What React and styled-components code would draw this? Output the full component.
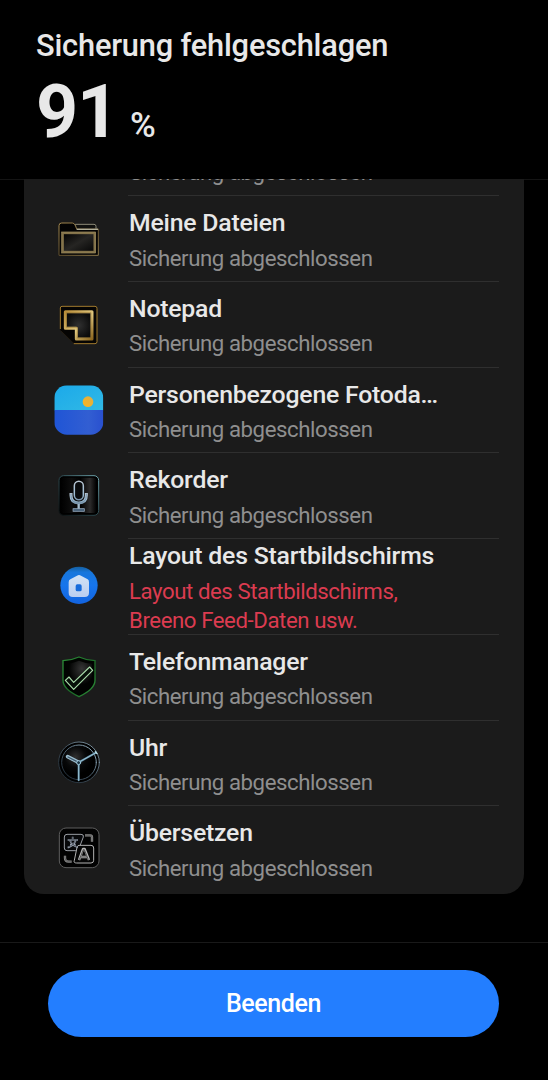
import React from 'react'
import styled, { createGlobalStyle } from 'styled-components'

const GlobalStyle = createGlobalStyle`
    * {
        box-sizing: border-box;
    }

    body {
        margin: 0;
        background: #000;
        font-family: Roboto, "Noto Sans", sans-serif;
    }
`;

const Screen = styled.div`
    display: flex;
    flex-direction: column;
    height: 1080px;
    background: #000;
    color: #e8e8e8;
    overflow: hidden;
`;

const Header = styled.header`
    flex: none;
    height: 180px;
    padding: 26px 36px 0;
    border-bottom: 1px solid #141414;
`;

const Heading = styled.h1`
    margin: 0;
    font-size: 30.8px;
    font-weight: 500;
    letter-spacing: -0.2px;
    line-height: 40px;
    white-space: nowrap;
`;

const Progress = styled.div`
    display: flex;
    align-items: baseline;
    gap: 12px;
    line-height: 92px;
`;

const Percent = styled.span`
    font-size: 73.5px;
    font-weight: 700;
    letter-spacing: -1.2px;
`;

const Sign = styled.span`
    font-size: 35px;
    font-weight: 500;
`;

/* the list is scrolled to its end, so the first row is cut off at the top */
const ListArea = styled.main`
    flex: 1;
    display: flex;
    flex-direction: column;
    justify-content: flex-end;
    min-height: 0;
    margin-top: -1px;
    padding: 0 24px 48px;
    overflow: hidden;
`;

const Card = styled.div`
    flex: none;
    padding-bottom: 2px;
    background: #1b1b1b;
    border-radius: 20px;
`;

const Row = styled.div`
    display: grid;
    grid-template-columns: 60px 371px;
    grid-template-rows: 100%;
    column-gap: 19px;
    align-items: center;
    height: ${({ $tall }) => ($tall ? '95.7px' : '85.75px')};
    padding-left: 25px;
`;

const RowText = styled.div`
    display: flex;
    flex-direction: column;
    gap: 5.5px;
    height: 100%;
    padding: ${({ $tall }) => ($tall ? '1.3px' : '11.1px')} 0 0 1px;
    border-bottom: 1px solid ${({ $last }) => ($last ? 'transparent' : '#2f2f2f')};
`;

const AppName = styled.div`
    flex: none;
    max-width: 318px;
    font-size: 24.8px;
    font-weight: 500;
    letter-spacing: -0.21px;
    line-height: 31px;
    white-space: nowrap;
    overflow: hidden;
    text-overflow: ellipsis;
`;

const Status = styled.div`
    flex: none;
    font-size: 22.2px;
    letter-spacing: -0.42px;
    line-height: 29px;
    color: ${({ $error }) => ($error ? '#dc3b50' : '#8f8f8f')};
    white-space: pre-line;
`;

const IconSvg = styled.svg`
    display: block;
    width: 60px;
    height: 60px;
`;

const Footer = styled.footer`
    flex: none;
    height: 138px;
    padding: 27px 49px 0 48px;
    border-top: 1px solid #191919;
`;

const ExitButton = styled.button`
    display: block;
    width: 100%;
    height: 67px;
    padding: 0;
    border: 0;
    border-radius: 34px;
    background: #237eff;
    color: #fff;
    font-family: inherit;
    font-size: 25px;
    font-weight: 500;
    letter-spacing: -0.4px;
`;

const FilesIcon = () => (
    <IconSvg viewBox="28 10 180 180" fill="none">
        <defs>
            <linearGradient id="folderGold" x1="0" y1="0" x2="1" y2="1">
                <stop offset="0" stopColor="#a98d52" />
                <stop offset="0.5" stopColor="#5f4e2c" />
                <stop offset="1" stopColor="#8c7748" />
            </linearGradient>
            <linearGradient id="folderDark" x1="0" y1="0" x2="1" y2="1">
                <stop offset="0" stopColor="#000" />
                <stop offset="0.5" stopColor="#262523" />
                <stop offset="1" stopColor="#050505" />
            </linearGradient>
        </defs>
        <path d="M107 56H163Q169 56 169 62V74H110Z" fill="#11110f" stroke="#8c8a78" strokeWidth="3" />
        <path d="M58 149V60Q58 52 66 52H98Q104 52 107 60L111 70H176V149Z" fill="#030303" stroke="url(#folderGold)" strokeWidth="3" />
        <path d="M111 71H175" stroke="#b2b09b" strokeWidth="4" />
        <rect x="69" y="82" width="96" height="57" fill="url(#folderDark)" stroke="#84734a" strokeWidth="7" />
        <rect x="66" y="79" width="102" height="63" stroke="#a39263" strokeWidth="1.5" />
    </IconSvg>
);

const NotepadIcon = () => (
    <IconSvg viewBox="27 12 180 180" fill="none">
        <defs>
            <linearGradient id="noteGold" x1="0" y1="0" x2="1" y2="1">
                <stop offset="0" stopColor="#b98e3a" />
                <stop offset="0.55" stopColor="#e0c77e" />
                <stop offset="1" stopColor="#8f6920" />
            </linearGradient>
            <radialGradient id="noteDark">
                <stop offset="0" stopColor="#303030" />
                <stop offset="1" stopColor="#0b0b0b" />
            </radialGradient>
        </defs>
        <path d="M66 46H165Q171 46 171 52V152Q171 158 165 158H102L61 118V51Q61 46 66 46Z" fill="#050403" />
        <path d="M61 114V51Q61 46 66 46H165Q171 46 171 52V152Q171 158 165 158H101" stroke="#a17a2d" strokeWidth="3" />
        <path d="M62 119L102 158" stroke="#2c2110" strokeWidth="2" />
        <path d="M76 62H156V144H109V112H76Z" fill="url(#noteDark)" stroke="url(#noteGold)" strokeWidth="9" strokeLinejoin="round" />
        <path d="M79 65H153V141H112V109H79Z" stroke="#8a6a2c" strokeWidth="1.5" />
    </IconSvg>
);

const PhotosIcon = () => (
    <IconSvg viewBox="27 14 180 180">
        <defs>
            <clipPath id="photoClip">
                <rect x="43" y="30" width="147" height="148" rx="38" />
            </clipPath>
            <linearGradient id="photoSky" x1="0" y1="0" x2="1" y2="1">
                <stop offset="0" stopColor="#1ba9ea" />
                <stop offset="1" stopColor="#31b9e5" />
            </linearGradient>
            <linearGradient id="photoSea" x1="0" y1="0" x2="1" y2="0">
                <stop offset="0" stopColor="#1f55d6" />
                <stop offset="0.7" stopColor="#325ed2" />
                <stop offset="1" stopColor="#2950cf" />
            </linearGradient>
            <linearGradient id="photoSun" x1="0" y1="1" x2="1" y2="0">
                <stop offset="0" stopColor="#fbb51d" />
                <stop offset="1" stopColor="#dfae47" />
            </linearGradient>
        </defs>
        <g clipPath="url(#photoClip)">
            <rect x="43" y="30" width="147" height="75" fill="url(#photoSky)" />
            <rect x="43" y="104" width="147" height="75" fill="url(#photoSea)" />
        </g>
        <circle cx="144" cy="79" r="16" fill="url(#photoSun)" />
    </IconSvg>
);

const RecorderIcon = () => (
    <IconSvg viewBox="28 16 180 180" fill="none">
        <defs>
            <linearGradient id="recShine" x1="0" y1="0" x2="1" y2="0">
                <stop offset="0" stopColor="#000" />
                <stop offset="0.3" stopColor="#0d0d0d" />
                <stop offset="0.55" stopColor="#000" />
                <stop offset="0.82" stopColor="#2c2b2b" />
                <stop offset="1" stopColor="#000" />
            </linearGradient>
            <linearGradient id="recEdge" x1="0" y1="1" x2="1" y2="0">
                <stop offset="0" stopColor="#0a0f10" />
                <stop offset="0.5" stopColor="#2c4a50" />
                <stop offset="1" stopColor="#6fa6af" />
            </linearGradient>
            <linearGradient id="recMic" x1="0" y1="0" x2="0" y2="1">
                <stop offset="0" stopColor="#b9c6d2" />
                <stop offset="0.7" stopColor="#9dbdd5" />
                <stop offset="1" stopColor="#7d98af" />
            </linearGradient>
        </defs>
        <rect x="58" y="45" width="119" height="119" rx="14" fill="#000" stroke="url(#recEdge)" strokeWidth="3" />
        <rect x="64" y="51" width="106" height="106" rx="10" fill="url(#recShine)" />
        <path d="M94 97V104Q94 127 117 127Q140 127 140 104V97" stroke="url(#recMic)" strokeWidth="9" />
        <path d="M94 99V104Q94 127 117 127Q140 127 140 104V99" stroke="#7894ab" strokeWidth="3" />
        <rect x="104" y="62" width="27" height="55" rx="13.5" fill="#090b0d" stroke="url(#recMic)" strokeWidth="4.5" />
        <path d="M117 130V147" stroke="#a5bccf" strokeWidth="7" />
        <rect x="100" y="144" width="34" height="8" fill="#4b647b" stroke="#9cb0c5" strokeWidth="2" />
    </IconSvg>
);

const LauncherIcon = () => (
    <IconSvg viewBox="27 21 180 180">
        <defs>
            <linearGradient id="homeBlue" x1="0" y1="0" x2="0" y2="1">
                <stop offset="0" stopColor="#155f9f" />
                <stop offset="0.15" stopColor="#1877dc" />
                <stop offset="0.5" stopColor="#1675ed" />
                <stop offset="1" stopColor="#1263df" />
            </linearGradient>
            <linearGradient id="homeWhite" x1="0" y1="0" x2="0" y2="1">
                <stop offset="0" stopColor="#d3e3f5" />
                <stop offset="1" stopColor="#bacdf0" />
            </linearGradient>
        </defs>
        <circle cx="117" cy="106" r="56" fill="url(#homeBlue)" />
        <path d="M111 77Q117 73 123 77L143 88Q147 90 147 97V128Q147 141 134 141H98Q86 141 86 128V97Q86 90 91 88Z" fill="url(#homeWhite)" />
        <rect x="107" y="103" width="18" height="21" rx="5" fill="#176bdb" />
    </IconSvg>
);

const ShieldIcon = () => (
    <IconSvg viewBox="27 22 180 180" fill="none">
        <defs>
            <radialGradient id="shieldDark" cx="0.6" cy="0.25" r="0.5">
                <stop offset="0" stopColor="#353535" />
                <stop offset="1" stopColor="#020302" />
            </radialGradient>
            <linearGradient id="shieldGreen" x1="0" y1="0" x2="1" y2="1">
                <stop offset="0" stopColor="#2c8d38" />
                <stop offset="0.6" stopColor="#1c6b28" />
                <stop offset="1" stopColor="#2f943a" />
            </linearGradient>
        </defs>
        <path d="M117 49Q139 59 165 60V119Q165 146 117 168Q69 146 69 119V60Q95 59 117 49Z" fill="#010301" stroke="url(#shieldGreen)" strokeWidth="4" />
        <path d="M117 60Q135 68 156 69V116Q156 139 117 156Q79 139 79 116V69Q99 68 117 60Z" fill="url(#shieldDark)" />
        <path d="M76 119L87 109L101 125L149 79L158 89L101 146Z" fill="#071009" stroke="#a9dcaa" strokeWidth="3.5" strokeLinejoin="round" />
    </IconSvg>
);

const ClockIcon = () => (
    <IconSvg viewBox="28 15 180 180" fill="none" strokeLinecap="round">
        <defs>
            <radialGradient id="clockDark" cx="0.4" cy="0.35">
                <stop offset="0" stopColor="#303030" />
                <stop offset="0.6" stopColor="#070809" />
                <stop offset="1" stopColor="#000" />
            </radialGradient>
            <linearGradient id="clockEdge" x1="0" y1="1" x2="1" y2="0">
                <stop offset="0" stopColor="#18232d" />
                <stop offset="0.55" stopColor="#526675" />
                <stop offset="1" stopColor="#a6c2d2" />
            </linearGradient>
        </defs>
        <circle cx="118" cy="103" r="61" fill="#000" stroke="url(#clockEdge)" strokeWidth="2.5" />
        <circle cx="118" cy="103" r="52" fill="url(#clockDark)" stroke="url(#clockEdge)" strokeWidth="3" />
        <path d="M117 103V157M117 103L169 74" stroke="#5f8aa3" strokeWidth="6" />
        <path d="M117 103V157M117 103L169 74" stroke="#a2cadb" strokeWidth="2.5" />
        <path d="M117 103L84 86" stroke="#9dbfd0" strokeWidth="11" />
        <path d="M111 100L85 87" stroke="#425a6c" strokeWidth="4" />
        <circle cx="117" cy="104" r="6" fill="#1c3443" stroke="#9cc7dc" strokeWidth="3" />
        <path d="M167 71L172 77" stroke="#bde3eb" strokeWidth="4" />
    </IconSvg>
);

const TranslateIcon = () => (
    <IconSvg viewBox="28 21 180 180" fill="none" strokeLinejoin="round">
        <rect x="59" y="48" width="119" height="119" rx="20" fill="#020202" stroke="#5e5e5e" strokeWidth="3" />
        <path d="M82 67H124Q133 67 131 75L119 107Q116 116 107 116H82Q74 116 74 108V75Q74 67 82 67Z" fill="#07080a" stroke="#999da3" strokeWidth="3" />
        <path d="M118 100H154Q162 100 162 108V145Q162 153 154 153H111Q101 153 104 145L112 106Q114 100 118 100Z" fill="#050505" stroke="#b2b2b2" strokeWidth="3" />
        {/* character with crossing strokes */}
        <path d="M99 74V81M84 84H115M91 86Q99 102 115 106M108 86Q101 102 84 107M91 98H108" stroke="#98a1ae" strokeWidth="5" />
        <path d="M99 75V81M86 84H113M92 87Q99 101 113 105M107 87Q101 101 86 105" stroke="#151922" strokeWidth="1.5" />
        <path d="M118 144L130 111H135L148 144M122 135H144" stroke="#b5b5b5" strokeWidth="7" />
        <path d="M119 143L131 113H134L146 143M124 135H142" stroke="#191919" strokeWidth="2" />
        <path d="M136 70H152Q157 70 157 76V89M76 131V138Q76 149 87 149H96" stroke="#8c8c8c" strokeWidth="7" />
        <path d="M136 70H152Q157 70 157 76V89M76 131V138Q76 149 87 149H96" stroke="#4a4a4a" strokeWidth="2" />
    </IconSvg>
);

const DONE = 'Sicherung abgeschlossen';

const apps = [
    { name: '', status: DONE },
    { name: 'Meine Dateien', status: DONE, Icon: FilesIcon },
    { name: 'Notepad', status: DONE, Icon: NotepadIcon },
    { name: 'Personenbezogene Fotoda…', status: DONE, Icon: PhotosIcon },
    { name: 'Rekorder', status: DONE, Icon: RecorderIcon },
    { name: 'Layout des Startbildschirms', status: 'Layout des Startbildschirms,\nBreeno Feed-Daten usw.', Icon: LauncherIcon, error: true },
    { name: 'Telefonmanager', status: DONE, Icon: ShieldIcon },
    { name: 'Uhr', status: DONE, Icon: ClockIcon },
    { name: 'Übersetzen', status: DONE, Icon: TranslateIcon },
];

const App = () => {
    return (
        <>
            <GlobalStyle />
            <Screen>
                <Header>
                    <Heading>Sicherung fehlgeschlagen</Heading>
                    <Progress>
                        <Percent>91</Percent>
                        <Sign>%</Sign>
                    </Progress>
                </Header>
                <ListArea>
                    <Card>
                        {apps.map(({ name, status, Icon, error }, index) => (
                            <Row key={index} $tall={error}>
                                {Icon ? <Icon /> : <span />}
                                <RowText $tall={error} $last={index === apps.length - 1}>
                                    <AppName>{name || '\u00a0'}</AppName>
                                    <Status $error={error}>{status}</Status>
                                </RowText>
                            </Row>
                        ))}
                    </Card>
                </ListArea>
                <Footer>
                    <ExitButton type="button">Beenden</ExitButton>
                </Footer>
            </Screen>
        </>
    )
}

export default App
